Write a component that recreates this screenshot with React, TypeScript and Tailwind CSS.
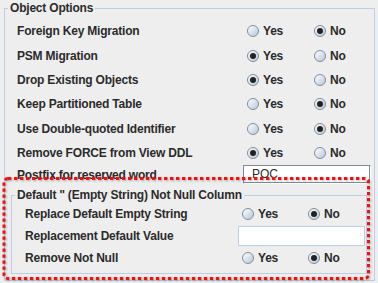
// Object Options panel
import React from "react";

type Choice = "yes" | "no";

function Radio({ checked, label }: { checked: boolean; label: string }) {
  return (
    <span className="flex items-center gap-[4px]">
      <span className="w-[12px] h-[12px] rounded-full border border-[#7f8d9c] bg-linear-to-br from-white to-[#b6c7da] flex items-center justify-center">
        {checked && <span className="w-[6px] h-[6px] rounded-full bg-[#222]" />}
      </span>
      <span>{label}</span>
    </span>
  );
}

function YesNo({ value }: { value: Choice }) {
  return (
    <>
      <Radio checked={value === "yes"} label="Yes" />
      <Radio checked={value === "no"} label="No" />
    </>
  );
}

const options: { label: string; value: Choice }[] = [
  { label: "Foreign Key Migration", value: "no" },
  { label: "PSM Migration", value: "yes" },
  { label: "Drop Existing Objects", value: "yes" },
  { label: "Keep Partitioned Table", value: "no" },
  { label: "Use Double-quoted Identifier", value: "no" },
  { label: "Remove FORCE from View DDL", value: "yes" },
];

export default function App() {
  return (
    <div className="relative w-[378px] h-[283px] overflow-hidden bg-[#eeeeee] text-[#2b2b2b] text-[12px] font-bold tracking-[-0.2px] font-['Liberation_Sans',Arial,sans-serif]">
      <fieldset className="ml-[4px] mt-[2px] w-[371px] border border-[#b8cfe5] pt-[4px] pb-[6px]">
        <legend className="ml-[3px] px-[2px] leading-[13px]">Object Options</legend>

        {/* yes / no rows */}
        {options.map((o) => (
          <div key={o.label} className="grid grid-cols-[230px_67px_auto] h-[24.4px] items-center pl-[12px]">
            <span>{o.label}</span>
            <YesNo value={o.value} />
          </div>
        ))}

        {/* Postfix */}
        <div className="grid grid-cols-[230px_auto] h-[19px] items-center pl-[12px]">
          <span>Postfix for reserved word</span>
          <span className="-ml-[4px] w-[128px] h-[19px] border border-t-[#7a8a99] border-l-[#7a8a99] border-r-white border-b-white">
            <span className="flex items-center h-full bg-white border-r border-b border-[#7a8a99] pl-[8px] font-normal tracking-normal">
              POC
            </span>
          </span>
        </div>

        {/* Empty string group */}
        <fieldset className="ml-[6px] mt-[5px] w-[356px] border border-[#b8cfe5] pt-[1px] pb-[4px]">
          <legend className="ml-[3px] px-[2px] leading-[13px]">Default '' (Empty String) Not Null Column</legend>
          <div className="grid grid-cols-[217px_66px_auto] h-[22px] items-center pl-[13px]">
            <span>Replace Default Empty String</span>
            <YesNo value="no" />
          </div>
          <div className="grid grid-cols-[217px_auto] h-[22px] items-center pl-[13px]">
            <span>Replacement Default Value</span>
            <span className="-ml-[4px] w-[127px] h-[20px] bg-white border border-[#b8cfe5]" />
          </div>
          <div className="grid grid-cols-[217px_66px_auto] h-[22px] items-center pl-[13px]">
            <span>Remove Not Null</span>
            <YesNo value="no" />
          </div>
        </fieldset>
      </fieldset>

      {/* red highlight */}
      <svg className="absolute inset-0 pointer-events-none drop-shadow-[1px_1px_1px_rgba(0,0,0,0.3)]" width="378" height="283">
        <rect x="4" y="178.5" width="364.5" height="100" rx="4" fill="none" stroke="#f01010" strokeWidth="3" strokeDasharray="3.4 2.6" />
      </svg>
    </div>
  );
}
